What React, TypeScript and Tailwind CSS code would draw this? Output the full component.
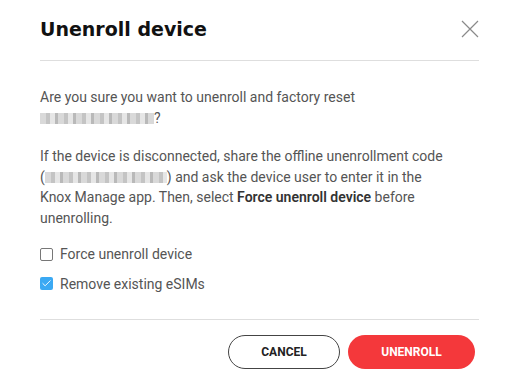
import { Check } from "lucide-react";

function Blur({ w }: { w: number }) {
  return (
    <span
      className="inline-block h-[11px] align-[-1px] bg-[repeating-linear-gradient(90deg,#d9d9d9_0px,#d9d9d9_6px,#c4c4c4_6px,#c4c4c4_10px,#e6e6e6_10px,#e6e6e6_15px,#b9b9b9_15px,#b9b9b9_18px)]"
      style={{ width: w }}
    />
  );
}

export default function App() {
  return (
    <div className="h-[390px] w-[519px] bg-white font-['Roboto','Noto_Sans',sans-serif]">
      <div className="px-10">
        <header className="flex h-[61px] items-center justify-between border-b border-[#dedede] pb-[2px]">
          <h1 className="font-['DejaVu_Sans',sans-serif] text-[19px] font-bold text-[#111]">
            Unenroll device
          </h1>
          <button type="button" aria-label="Close" className="-mr-[3px] grid h-6 w-6 place-items-center">
            <svg width="18" height="18" viewBox="0 0 18 18" fill="none" stroke="#8a8a8a" strokeWidth="1.2">
              <path d="M1 1l16 16M17 1L1 17" />
            </svg>
          </button>
        </header>

        <div className="pt-[26px] text-[14px] leading-[20.5px] text-[#555]">
          <p>
            Are you sure you want to unenroll and factory reset
            <br />
            <Blur w={114} />?
          </p>
          <p className="mt-[18px] pr-7">
            If the device is disconnected, share the offline unenrollment code{" "}
            <span className="whitespace-nowrap">
              (<Blur w={122} />)
            </span>{" "}
            and ask the device user to enter it in the Knox Manage app. Then, select{" "}
            <b className="font-semibold text-[#333]">Force unenroll device</b> before unenrolling.
          </p>

          <div className="mt-[16px] flex flex-col gap-[9px]">
            <label className="flex items-center gap-[7px]">
              <span className="h-[13px] w-[13px] rounded-[2px] border border-[#777] bg-white" />
              <span>Force unenroll device</span>
            </label>
            <label className="flex items-center gap-[7px]">
              <span className="grid h-[13px] w-[13px] place-items-center rounded-[2px] bg-[#3ba9f3]">
                <Check className="h-[11px] w-[11px] text-white" strokeWidth={2} />
              </span>
              <span>Remove existing eSIMs</span>
            </label>
          </div>
        </div>

        <div className="mt-[25px] flex justify-end gap-2 border-t border-[#dedede] pr-1 pt-[15px]">
          <button
            type="button"
            className="h-[34px] w-[112px] rounded-full border border-[#444] bg-white text-[12px] font-bold text-[#222]"
          >
            CANCEL
          </button>
          <button
            type="button"
            className="h-[34px] w-[127px] rounded-full bg-[#f4383b] text-[12px] font-bold text-white"
          >
            UNENROLL
          </button>
        </div>
      </div>
    </div>
  );
}
